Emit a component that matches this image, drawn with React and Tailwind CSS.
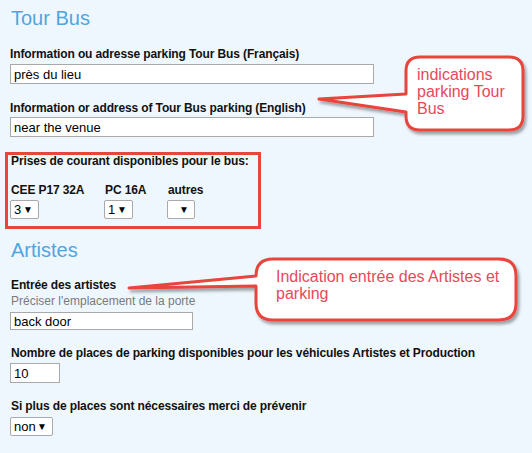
import React from 'react'

const label = 'text-[12px] leading-[14px] font-bold text-[#111] tracking-[-0.12px]'

function TextBox({ value, w, h = 20, mt }) {
  return (
    <div
      className={`${mt} bg-white border border-[#a9a9a9] text-[13px] leading-none text-black pl-[3px] flex items-center`}
      style={{ width: w, height: h }}
    >
      {value}
    </div>
  )
}

function FakeSelect({ value, w }) {
  return (
    <div
      className="h-[19px] bg-white border border-[#a9a9a9] rounded-[2px] flex items-center justify-between pl-[3px] pr-[5px] text-[13px] leading-none text-black"
      style={{ width: w }}
    >
      <span>{value}</span>
      <span className="text-[10px]">▼</span>
    </div>
  )
}

export default function App() {
  return (
    <div className="relative w-[532px] h-[453px] overflow-hidden bg-[#eff7fe]" style={{ fontFamily: '"Liberation Sans", Arial, sans-serif' }}>
      <div className="pl-[10px] pt-[6px]">
        <h2 className="text-[20px] leading-[24px] text-[#4ea6e0] ml-px">Tour Bus</h2>

        <div className={`${label} mt-[17px]`}>Information ou adresse parking Tour Bus (Français)</div>
        <TextBox value="près du lieu" w={364} mt="mt-[3px]" />

        <div className={`${label} mt-[17px]`}>Information or address of Tour Bus parking (English)</div>
        <TextBox value="near the venue" w={364} mt="mt-[2px]" />

        <div className={`${label} mt-[17px] ml-px`}>Prises de courant disponibles pour le bus:</div>
        <div className="flex mt-[15px]">
          <div className="w-[94px]">
            <div className={`${label} ml-px`}>CEE P17 32A</div>
            <div className="mt-[3px]"><FakeSelect value="3" w={29} /></div>
          </div>
          <div className="w-[63px]">
            <div className={`${label} ml-px`}>PC 16A</div>
            <div className="mt-[3px]"><FakeSelect value="1" w={29} /></div>
          </div>
          <div>
            <div className={`${label} ml-px`}>autres</div>
            <div className="mt-[3px]"><FakeSelect value="" w={28} /></div>
          </div>
        </div>

        <h2 className="text-[20px] leading-[24px] text-[#4ea6e0] mt-[19px] ml-px">Artistes</h2>

        <div className={`${label} mt-[16px] ml-px`}>Entrée des artistes</div>
        <div className="text-[12px] leading-[14px] text-[#7a7a7a] mt-[2px] ml-px">Préciser l'emplacement de la porte</div>
        <TextBox value="back door" w={183} h={18} mt="mt-[4px]" />

        <div className={`${label} mt-[16px] ml-px`}>Nombre de places de parking disponibles pour les véhicules Artistes et Production</div>
        <TextBox value="10" w={50} mt="mt-[3px]" />

        <div className={`${label} mt-[16px] ml-px`}>Si plus de places sont nécessaires merci de prévenir</div>
        <div className="mt-[4px]"><FakeSelect value="non" w={43} /></div>
      </div>

      {/* annotation frame around power outlets */}
      <div className="absolute left-[5px] top-[152px] w-[256px] h-[77px] border-[3px] border-[#e8453c] pointer-events-none" />

      {/* callouts */}
      <svg className="absolute inset-0 pointer-events-none" width="532" height="453" viewBox="0 0 532 453">
        <defs>
          <filter id="sh" x="-10%" y="-10%" width="130%" height="140%">
            <feDropShadow dx="2" dy="3" stdDeviation="1.5" floodColor="#000" floodOpacity="0.35" />
          </filter>
        </defs>
        <path
          d="M420 57 H509 Q523 57 523 71 V116 Q523 130 509 130 H420 Q406 130 406 116 V112 L319 99 L406 94 V71 Q406 57 420 57 Z"
          fill="#fff" stroke="#e8453c" strokeWidth="3" strokeLinejoin="round" filter="url(#sh)"
        />
        <path
          d="M273 259 H499 Q516 259 516 276 V303 Q516 320 499 320 H273 Q256 320 256 303 V286 L129 288 L256 276 Q256 259 273 259 Z"
          fill="#fff" stroke="#e8453c" strokeWidth="3" strokeLinejoin="round" filter="url(#sh)"
        />
      </svg>
      <div className="absolute left-[417px] top-[66px] text-[16px] leading-[17px] text-[#e9485a]">
        indications<br />parking Tour<br />Bus
      </div>
      <div className="absolute left-[276px] top-[268px] text-[16px] leading-[17px] text-[#e9485a]">
        Indication entrée des Artistes et<br />parking
      </div>
    </div>
  )
}
